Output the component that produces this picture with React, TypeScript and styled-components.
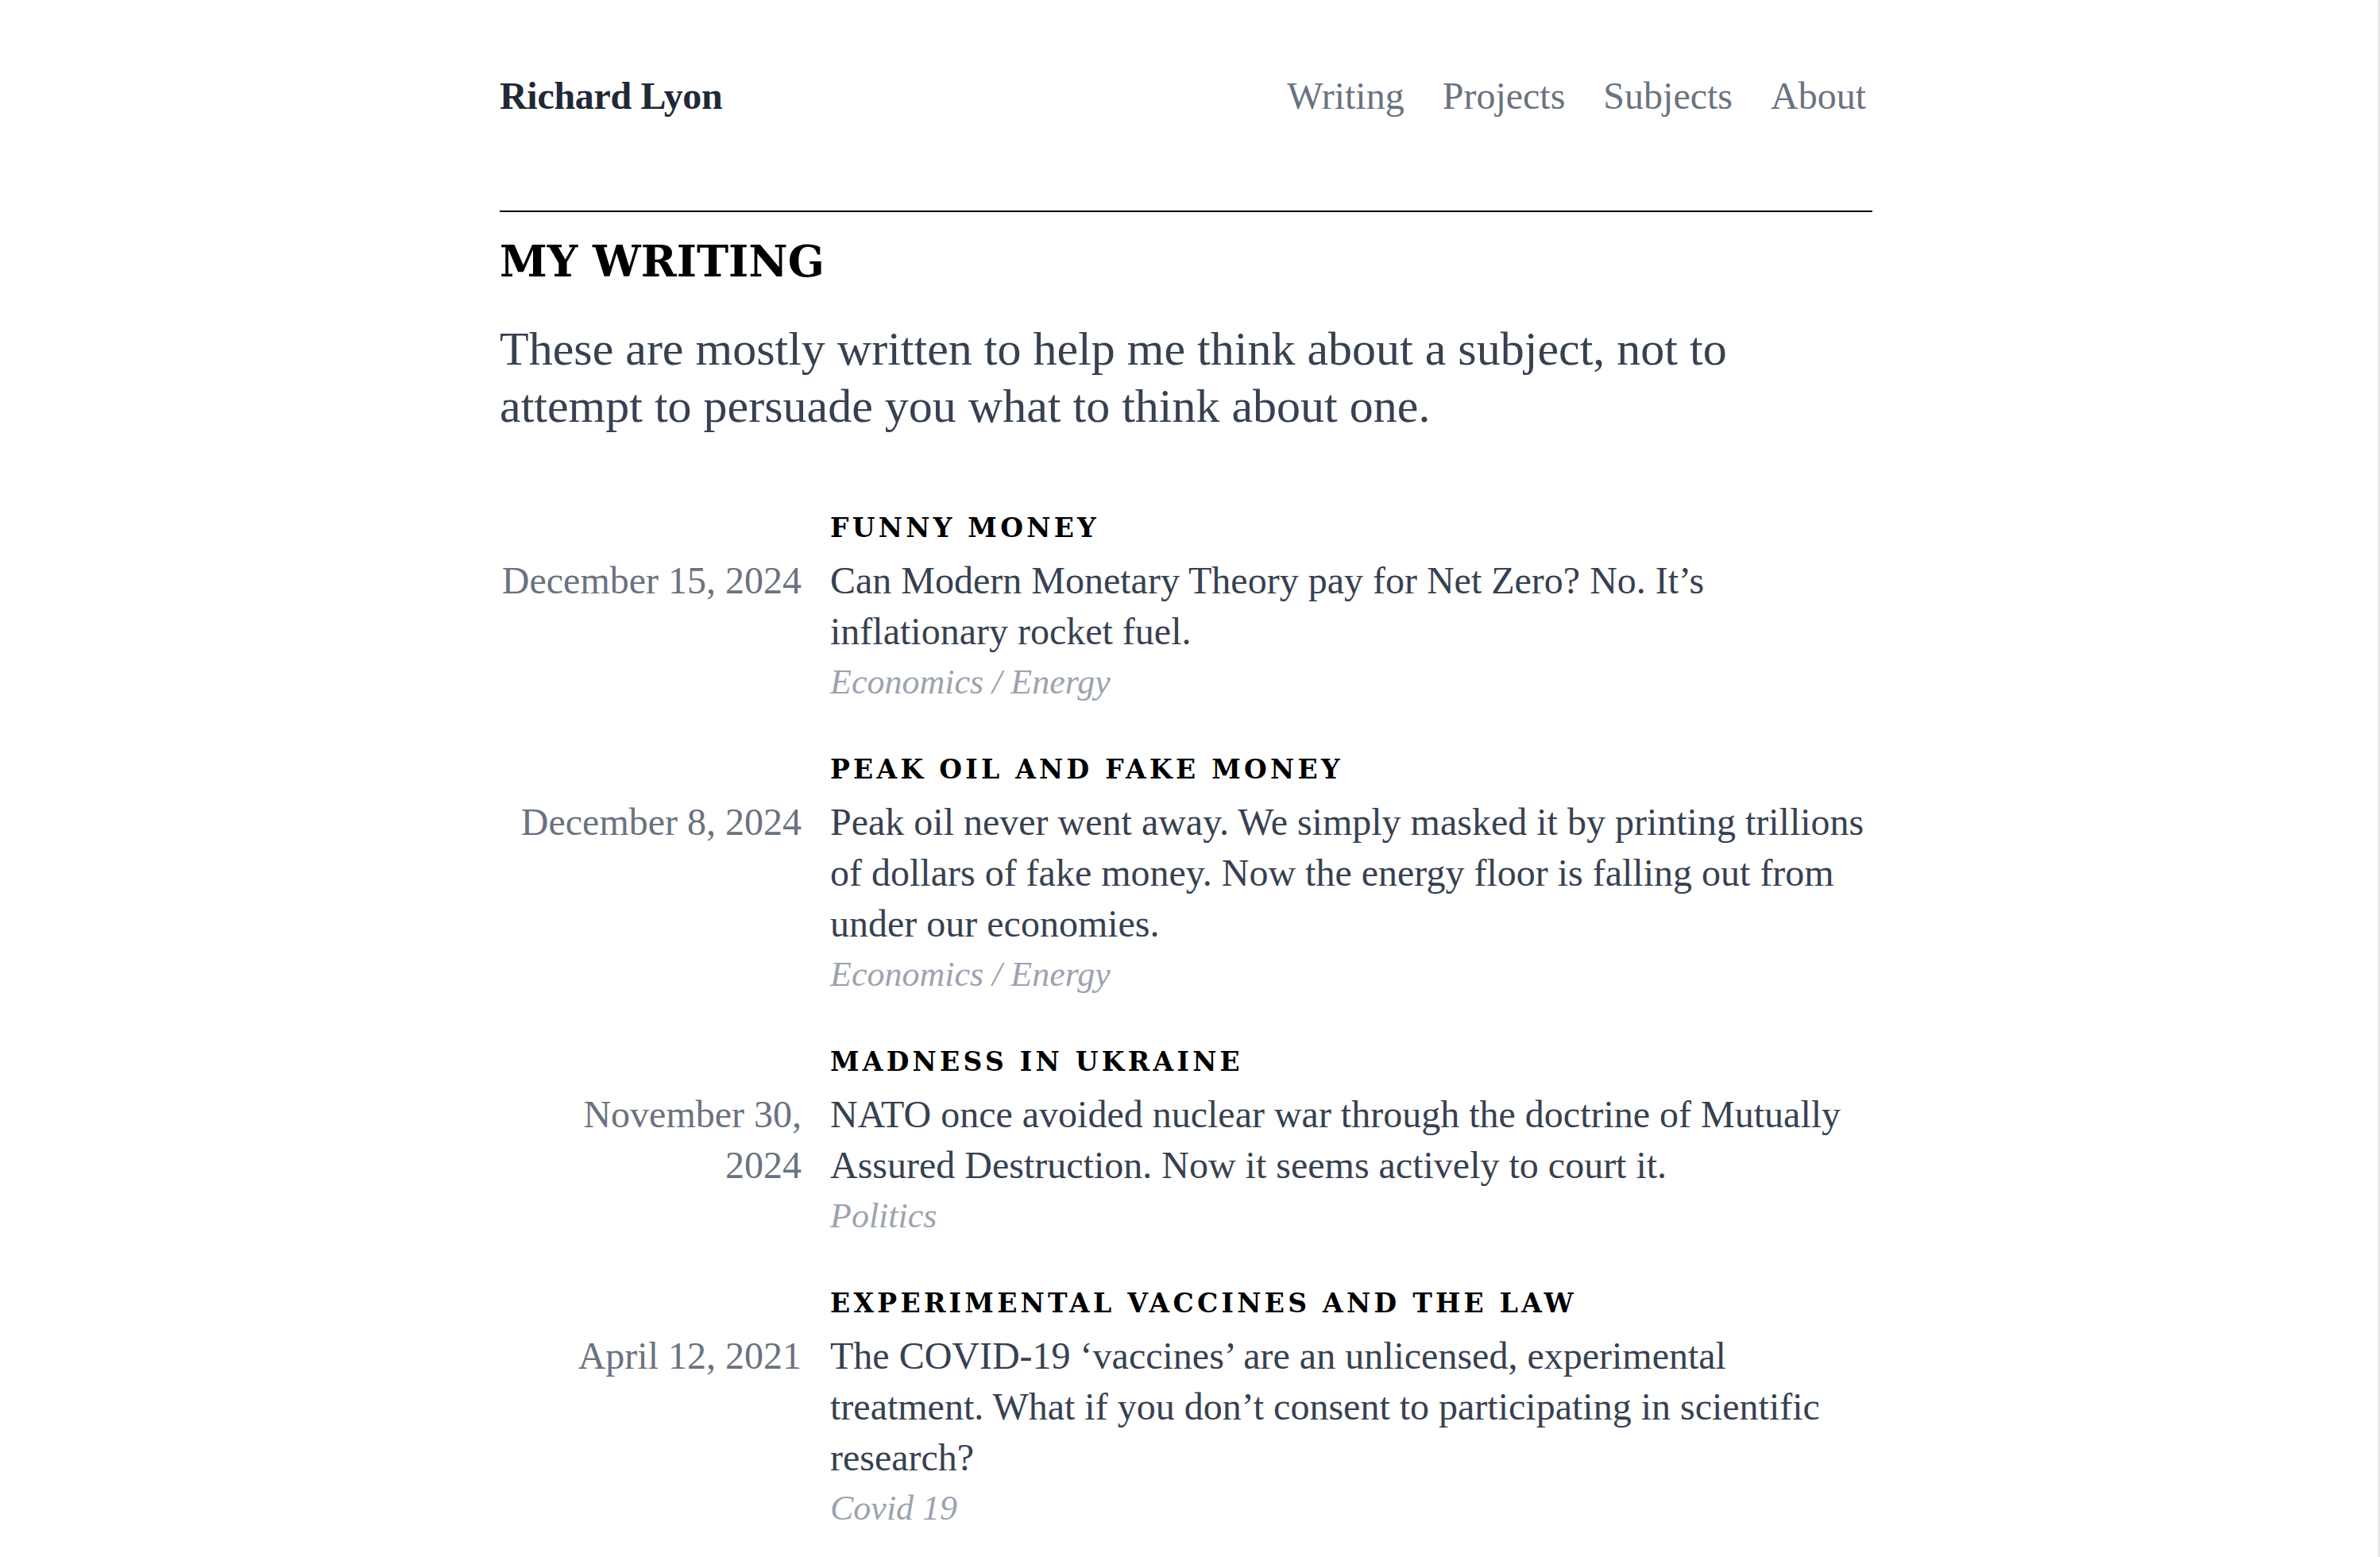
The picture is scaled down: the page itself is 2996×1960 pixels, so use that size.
import styled, { createGlobalStyle } from 'styled-components';

const GlobalStyle = createGlobalStyle`
	html {
		overflow: hidden;
	}

	body {
		margin: 0;
		min-height: 100vh;
		padding-right: 8px;
		border-right: 2px solid #e3e3e3;
		background: #fff;
		font-family: 'Liberation Serif', 'Times New Roman', serif;
	}
`;

type Article = {
	title: string;
	date: string;
	summary: string;
	subjects: string[];
};

const articles: Article[] = [
	{
		title: 'Funny Money',
		date: 'December 15, 2024',
		summary:
			'Can Modern Monetary Theory pay for Net Zero? No. It\u2019s inflationary rocket fuel.',
		subjects: ['Economics', 'Energy'],
	},
	{
		title: 'Peak Oil and Fake Money',
		date: 'December 8, 2024',
		summary:
			'Peak oil never went away. We simply masked it by printing trillions of dollars of fake money. Now the energy floor is falling out from under our economies.',
		subjects: ['Economics', 'Energy'],
	},
	{
		title: 'Madness in Ukraine',
		date: 'November 30, 2024',
		summary:
			'NATO once avoided nuclear war through the doctrine of Mutually Assured Destruction. Now it seems actively to court it.',
		subjects: ['Politics'],
	},
	{
		title: 'Experimental Vaccines and the Law',
		date: 'April 12, 2021',
		summary:
			'The COVID-19 \u2018vaccines\u2019 are an unlicensed, experimental treatment. What if you don\u2019t consent to participating in scientific research?',
		subjects: ['Covid 19'],
	},
];

const App = () => {
	return (
		<>
			<GlobalStyle />
			<Page>
				<Header>
					<Name href='#'>Richard Lyon</Name>
					<Nav>
						<NavLink href='#'>Writing</NavLink>
						<NavLink href='#'>Projects</NavLink>
						<NavLink href='#'>Subjects</NavLink>
						<NavLink href='#'>About</NavLink>
					</Nav>
				</Header>
				<Rule />
				<SectionTitle>My Writing</SectionTitle>
				<Intro>
					These are mostly written to help me think about a subject, not to
					attempt to persuade you what to think about one.
				</Intro>
				<List>
					{articles.map((a) => (
						<Item key={a.title}>
							<ItemTitle>{a.title}</ItemTitle>
							<ItemDate>{a.date}</ItemDate>
							<Summary>{a.summary}</Summary>
							<Subjects>
								{a.subjects.map((s, i) => (
									<span key={s}>
										{i > 0 && ' / '}
										<SubjectLink href='#'>{s}</SubjectLink>
									</span>
								))}
							</Subjects>
						</Item>
					))}
				</List>
			</Page>
		</>
	);
};

const Page = styled.div`
	max-width: 1728px;
	margin: 0 auto;
	padding-top: 89px;
`;

const Header = styled.header`
	display: flex;
	justify-content: space-between;
	align-items: baseline;
	height: 64px;
`;

const Name = styled.a`
	font-size: 48px;
	line-height: 64px;
	font-weight: 700;
	letter-spacing: -0.3px;
	color: #1f2937;
	text-decoration: none;
`;

const Nav = styled.nav`
	display: flex;
	gap: 48px;
	padding-right: 8px;
`;

const NavLink = styled.a`
	font-size: 48px;
	line-height: 64px;
	color: #6b7280;
	text-decoration: none;
`;

const Rule = styled.hr`
	margin: 112px 0 0;
	border: 0;
	border-top: 2px solid #000;
`;

const SectionTitle = styled.h1`
	margin: 30px 0 0;
	font-family: 'DejaVu Serif', 'Liberation Serif', serif;
	font-size: 54px;
	line-height: 64px;
	font-weight: 700;
	text-transform: uppercase;
	color: #000;
`;

const Intro = styled.p`
	margin: 42px 0 0;
	font-size: 60px;
	line-height: 72px;
	color: #374151;
`;

const List = styled.div`
	display: flex;
	flex-direction: column;
	gap: 52px;
	margin-top: 92px;
`;

const Item = styled.article`
	display: grid;
	grid-template-columns: 380px 1fr;
	column-gap: 36px;
`;

const ItemTitle = styled.h2`
	grid-column: 2;
	margin: 2px 0 10px;
	font-family: 'DejaVu Serif', 'Liberation Serif', serif;
	font-size: 33px;
	line-height: 48px;
	font-weight: 700;
	letter-spacing: 0.13em;
	text-transform: uppercase;
	color: #000;
`;

const ItemDate = styled.div`
	grid-column: 1;
	text-align: right;
	font-size: 48px;
	line-height: 64px;
	color: #6b7280;
`;

const Summary = styled.p`
	grid-column: 2;
	margin: 0;
	font-size: 48px;
	line-height: 64px;
	color: #374151;
`;

const Subjects = styled.div`
	grid-column: 2;
	font-size: 44px;
	line-height: 64px;
	font-style: italic;
	color: #9ca3af;
`;

const SubjectLink = styled.a`
	color: inherit;
	text-decoration: none;
`;

export default App;
